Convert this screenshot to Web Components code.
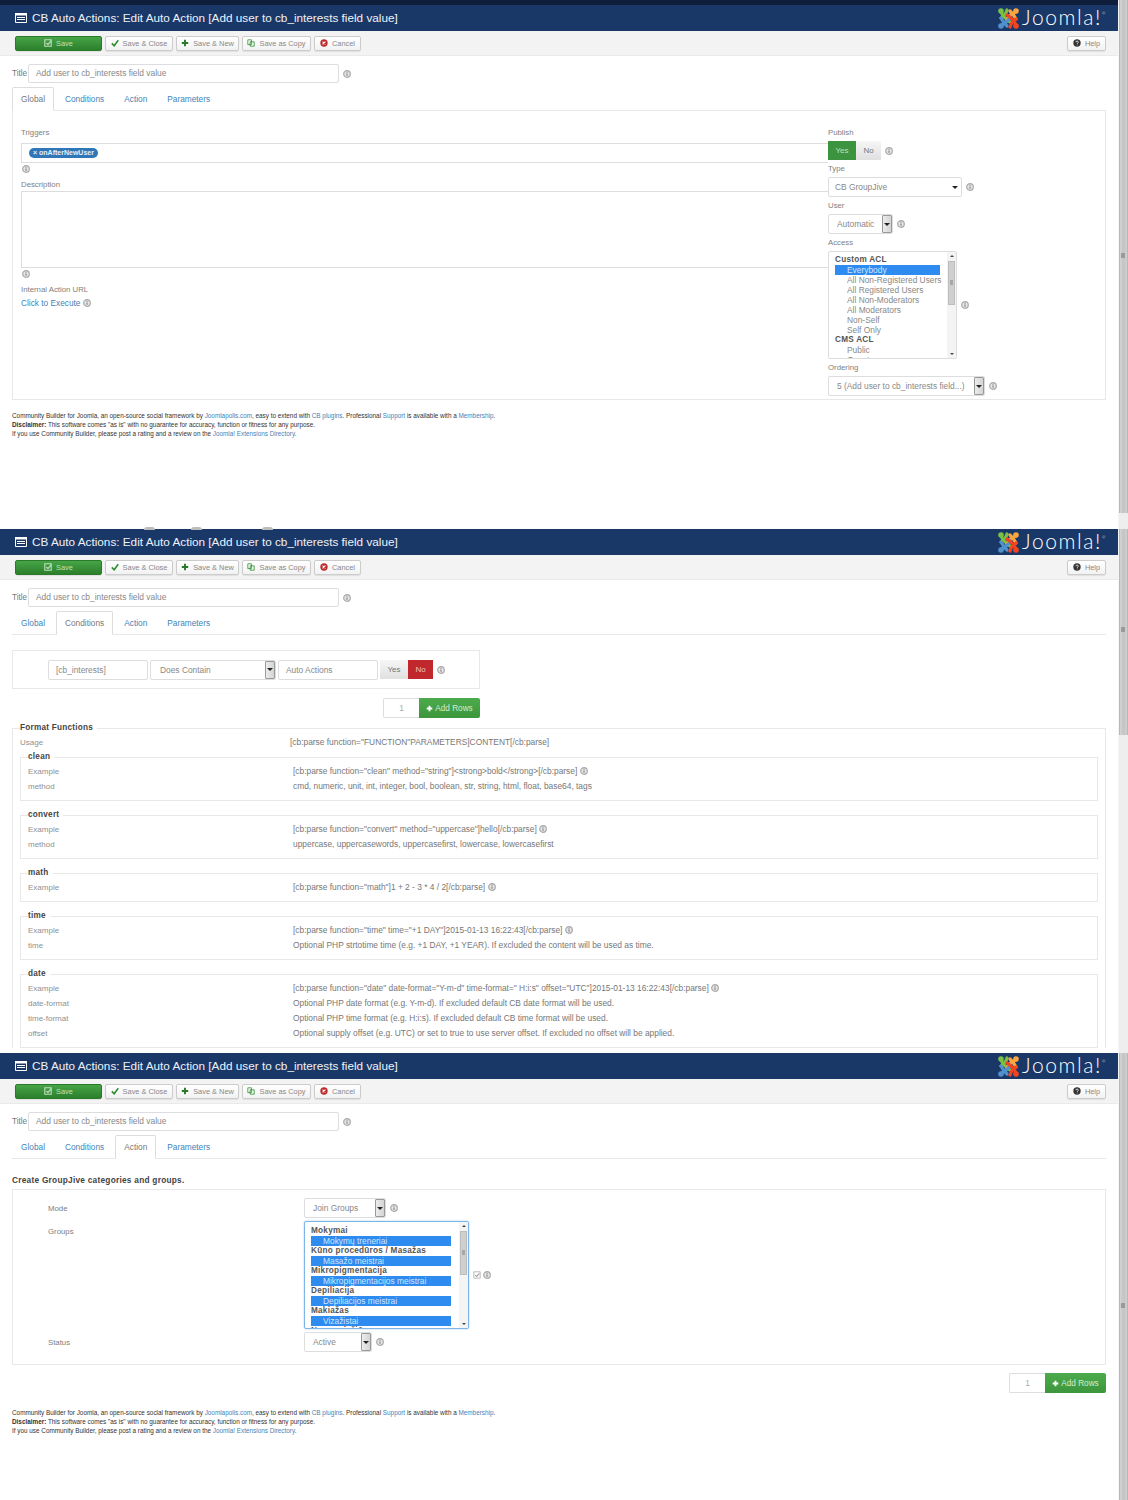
<!DOCTYPE html>
<html>
<head>
<meta charset="utf-8">
<title>CB Auto Actions</title>
<style>
  html, body { margin: 0; padding: 0; background: #fff; }
  body { font-family: "Liberation Sans", Arial, sans-serif; font-size: 8.4px; color: #777; width: 1128px; height: 1500px; overflow: hidden; }
</style>
</head>
<body>

<jm-shot h="524" strip="#0e1e3a" thumb-top="0" thumb-h="513" grip="253">
  <jm-header></jm-header>
  <jm-toolbar></jm-toolbar>
  <jm-title-row value="Add user to cb_interests field value"></jm-title-row>
  <jm-tabs active="Global"></jm-tabs>
  <jm-global-pane>
    <jm-label slot="left">Triggers</jm-label>
    <jm-tagbox slot="left">onAfterNewUser</jm-tagbox>
    <jm-info slot="left" class="stack"></jm-info>
    <jm-label slot="left" style="margin-top:7px">Description</jm-label>
    <jm-textarea slot="left"></jm-textarea>
    <jm-info slot="left" class="stack"></jm-info>
    <jm-label slot="left" style="margin-top:7px">Internal Action URL</jm-label>
    <jm-link slot="left">Click to Execute <jm-info></jm-info></jm-link>

    <jm-field slot="right" label="Publish"><jm-toggle on="Yes"></jm-toggle><jm-info></jm-info></jm-field>
    <jm-field slot="right" label="Type"><jm-select w="134" value="CB GroupJive" kind="chosen"></jm-select><jm-info></jm-info></jm-field>
    <jm-field slot="right" label="User"><jm-select w="65" value="Automatic"></jm-select><jm-info></jm-info></jm-field>
    <jm-field slot="right" label="Access"><jm-list w="129" h="108">
      <jm-opt group>Custom ACL</jm-opt>
      <jm-opt selected>Everybody</jm-opt>
      <jm-opt>All Non-Registered Users</jm-opt>
      <jm-opt>All Registered Users</jm-opt>
      <jm-opt>All Non-Moderators</jm-opt>
      <jm-opt>All Moderators</jm-opt>
      <jm-opt>Non-Self</jm-opt>
      <jm-opt>Self Only</jm-opt>
      <jm-opt group>CMS ACL</jm-opt>
      <jm-opt>Public</jm-opt>
      <jm-opt>Guest</jm-opt>
    </jm-list><jm-info></jm-info></jm-field>
    <jm-field slot="right" label="Ordering" style="margin-top:1px"><jm-select w="157" value="5 (Add user to cb_interests field...)"></jm-select><jm-info></jm-info></jm-field>
  </jm-global-pane>
  <jm-foot style="margin-top:11px"></jm-foot>
</jm-shot>

<jm-shot h="524" strip="#fff" thumb-top="5" thumb-h="206" grip="103" bumps>
  <jm-header></jm-header>
  <jm-toolbar></jm-toolbar>
  <jm-title-row value="Add user to cb_interests field value"></jm-title-row>
  <jm-tabs active="Conditions"></jm-tabs>
  <jm-cond-pane>
    <jm-input w="100" value="[cb_interests]"></jm-input>
    <jm-select w="126" value="Does Contain" style="margin-left:2px;--pad:9px"></jm-select>
    <jm-input w="100" value="Auto Actions" style="margin-left:2px"></jm-input>
    <jm-toggle on="No" style="margin-left:2px"></jm-toggle>
    <jm-info style="margin-left:4px"></jm-info>
  </jm-cond-pane>
  <jm-addrows style="width:468px;margin-top:9px"></jm-addrows>
  <jm-fs legend="Format Functions" outer>
    <jm-row outer label="Usage">[cb:parse function="FUNCTION"PARAMETERS]CONTENT[/cb:parse]</jm-row>
    <jm-fs legend="clean" style="margin-top:2px">
      <jm-row label="Example">[cb:parse function="clean" method="string"]&lt;strong&gt;bold&lt;/strong&gt;[/cb:parse] <jm-info></jm-info></jm-row>
      <jm-row label="method">cmd, numeric, unit, int, integer, bool, boolean, str, string, html, float, base64, tags</jm-row>
    </jm-fs>
    <jm-fs legend="convert">
      <jm-row label="Example">[cb:parse function="convert" method="uppercase"]hello[/cb:parse] <jm-info></jm-info></jm-row>
      <jm-row label="method">uppercase, uppercasewords, uppercasefirst, lowercase, lowercasefirst</jm-row>
    </jm-fs>
    <jm-fs legend="math">
      <jm-row label="Example">[cb:parse function="math"]1 + 2 - 3 * 4 / 2[/cb:parse] <jm-info></jm-info></jm-row>
    </jm-fs>
    <jm-fs legend="time">
      <jm-row label="Example">[cb:parse function="time" time="+1 DAY"]2015-01-13 16:22:43[/cb:parse] <jm-info></jm-info></jm-row>
      <jm-row label="time">Optional PHP strtotime time (e.g. +1 DAY, +1 YEAR). If excluded the content will be used as time.</jm-row>
    </jm-fs>
    <jm-fs legend="date">
      <jm-row label="Example">[cb:parse function="date" date-format="Y-m-d" time-format=" H:i:s" offset="UTC"]2015-01-13 16:22:43[/cb:parse] <jm-info></jm-info></jm-row>
      <jm-row label="date-format">Optional PHP date format (e.g. Y-m-d). If excluded default CB date format will be used.</jm-row>
      <jm-row label="time-format">Optional PHP time format (e.g. H:i:s). If excluded default CB time format will be used.</jm-row>
      <jm-row label="offset">Optional supply offset (e.g. UTC) or set to true to use server offset. If excluded no offset will be applied.</jm-row>
    </jm-fs>
  </jm-fs>
</jm-shot>

<jm-shot h="452" strip="#fff" thumb-top="5" thumb-h="447" grip="255">
  <jm-header></jm-header>
  <jm-toolbar></jm-toolbar>
  <jm-title-row value="Add user to cb_interests field value"></jm-title-row>
  <jm-tabs active="Action"></jm-tabs>
  <jm-action-pane heading="Create GroupJive categories and groups.">
    <jm-param label="Mode" center><jm-select w="82" value="Join Groups"></jm-select><jm-info></jm-info></jm-param>
    <jm-param label="Groups"><jm-list w="165" h="108" focus>
      <jm-opt group>Mokymai</jm-opt>
      <jm-opt selected>Mokymų treneriai</jm-opt>
      <jm-opt group>Kūno procedūros / Masažas</jm-opt>
      <jm-opt selected>Masažo meistrai</jm-opt>
      <jm-opt group>Mikropigmentacija</jm-opt>
      <jm-opt selected>Mikropigmentacijos meistrai</jm-opt>
      <jm-opt group>Depiliacija</jm-opt>
      <jm-opt selected>Depiliacijos meistrai</jm-opt>
      <jm-opt group>Makiažas</jm-opt>
      <jm-opt selected>Vizažistai</jm-opt>
      <jm-opt group>Nagų priežiūra</jm-opt>
    </jm-list><jm-check></jm-check><jm-info style="margin-left:-2px"></jm-info></jm-param>
    <jm-param label="Status" center><jm-select w="68" value="Active"></jm-select><jm-info></jm-info></jm-param>
  </jm-action-pane>
  <jm-addrows style="width:1094px;margin-top:8px"></jm-addrows>
  <jm-foot style="margin-top:15px"></jm-foot>
</jm-shot>

<script>
// small helper, every element below is just a class with a shadow root
function shadow(el, html) {
  el.attachShadow({mode: 'open'});
  el.shadowRoot.innerHTML = html;
}

const ICONS = {
  save: '<path d="M1 1h8v8H1z" fill="none" stroke="currentColor" stroke-width="1.4"/><path d="M3 5l2 2 4-5" fill="none" stroke="currentColor" stroke-width="1.6"/>',
  check: '<path d="M1 5.5l3 3 5-7" fill="none" stroke="currentColor" stroke-width="2"/>',
  plus: '<path d="M5 1v8M1 5h8" fill="none" stroke="currentColor" stroke-width="2.4"/>',
  copy: '<path d="M1 1h4.5v6H1z M4 3.5h5v5.5H4z" fill="none" stroke="currentColor" stroke-width="1"/>',
  cancel: '<circle cx="5" cy="5" r="4.6" fill="currentColor"/><path d="M3.2 3.2l3.6 3.6M6.8 3.2L3.2 6.8" stroke="#fff" stroke-width="1.4"/>',
  help: '<circle cx="5" cy="5" r="4.6" fill="currentColor"/><path d="M3.6 4c0-2 3-2 3 0 0 1-1.400 1-1.400 2" fill="none" stroke="#fff" stroke-width="1"/><circle cx="5.200" cy="7.600" r=".6" fill="#fff"/>'
};

class JmShot extends HTMLElement {
  constructor() {
    super();
    shadow(this, `
      <style>
        :host { display: flex; overflow: hidden; position: relative; }
        .main { width: 1118px; flex: none; display: flex; flex-direction: column; }
        .strip { height: 5px; flex: none; }
        .content { padding: 0 12px; }
        .head { flex: none; }
        .track { width: 10px; flex: none; background: #eee; border-left: 1px solid #f6f6f6; box-sizing: border-box; position: relative; }
        .thumb { position: absolute; left: 0; right: 0; background: linear-gradient(90deg, #d4d4d4, #c4c4c4 50%, #cfcfcf); border: 1px solid #b8b8b8; border-width: 0 1px; box-sizing: border-box; }
        .grip { position: absolute; left: 2px; width: 4px; height: 5px; background: #9a9a9a; }
        .bump { position: absolute; top: 3px; width: 11px; height: 3px; border-radius: 6px 6px 0 0; background: #bbb; }
      </style>
      <div class="main">
        <div class="strip"></div>
        <div class="head"><slot name="head"></slot></div>
        <div class="content"><slot></slot></div>
      </div>
      <div class="track"><div class="thumb"></div><div class="grip"></div></div>
    `);
  }
  connectedCallback() {
    const r = this.shadowRoot;
    this.style.height = this.getAttribute('h') + 'px';
    r.querySelector('.strip').style.background = this.getAttribute('strip');
    const th = r.querySelector('.thumb');
    th.style.top = this.getAttribute('thumb-top') + 'px';
    th.style.height = this.getAttribute('thumb-h') + 'px';
    r.querySelector('.grip').style.top = this.getAttribute('grip') + 'px';
    for (const c of this.children) {
      if (c.localName === 'jm-header' || c.localName === 'jm-toolbar') c.slot = 'head';
    }
    if (this.hasAttribute('bumps')) {
      for (const x of [144, 191, 262]) {
        const b = document.createElement('div');
        b.className = 'bump';
        b.style.left = x + 'px';
        r.appendChild(b);
      }
    }
  }
}

class JmHeader extends HTMLElement {
  constructor() {
    super();
    shadow(this, `
      <style>
        :host { display: flex; align-items: center; height: 26px; background: #1a3867; color: #fff; padding-left: 15px; }
        .title { font-size: 11.750px; margin: -1px 0 0 5px; color: #eef2f8; white-space: nowrap; }
        .logo { margin-left: auto; display: flex; align-items: center; margin-right: 11px; }
        .word { font-family: "Lato", "Open Sans", sans-serif; font-weight: 300; font-size: 21px; letter-spacing: 1.600px; margin: -2px 0 0 2px; color: #fff; line-height: 26px; }
        sup { font-size: 4px; vertical-align: 10px; line-height: 0; }
      </style>
      <svg width="12" height="10" viewBox="0 0 12 10"><path d="M.5.5h11v9H.5z" fill="none" stroke="#fff"/><path d="M0 0h12v2.500H0z" fill="#fff"/><path d="M2 4.500h8M2 6.500h8" stroke="#fff"/></svg>
      <div class="title">CB Auto Actions: Edit Auto Action [Add user to cb_interests field value]</div>
      <div class="logo">
        <svg width="23" height="23" viewBox="0 0 23 23" fill="none" stroke-width="3.200" stroke-linecap="round">
          <path d="M4 5c2 5 5 7 9 10" stroke="#7ac143"/><path d="M10 3c-1 4-3 6-6 8" stroke="#7ac143"/><circle cx="4" cy="4" r="2.800" fill="#7ac143"/>
          <path d="M19 5c-4 1-7 4-9 8" stroke="#f9a541"/><path d="M13 4c2 2 4 4 6 8" stroke="#f9a541"/><circle cx="19" cy="4" r="2.800" fill="#f9a541"/>
          <path d="M4 18c4-1 7-4 9-8" stroke="#5091cd"/><path d="M10 19c-2-2-4-4-6-8" stroke="#5091cd"/><circle cx="4" cy="19" r="2.800" fill="#5091cd"/>
          <path d="M19 18c-2-5-5-7-9-10" stroke="#f44321"/><path d="M13 20c1-4 3-6 6-8" stroke="#f44321"/><circle cx="19" cy="19" r="2.800" fill="#f44321"/>
        </svg>
        <div class="word">Joomla!<sup>®</sup></div>
      </div>
    `);
  }
}

class JmBtn extends HTMLElement {
  constructor() {
    super();
    shadow(this, `
      <style>
        :host { display: inline-flex; align-items: center; justify-content: center; gap: 4px; height: 15px; box-sizing: border-box; background: linear-gradient(#fff, #f2f2f2); border: 1px solid #ccc; border-radius: 2px; font-size: 7.400px; color: #888; white-space: nowrap; box-shadow: 0 1px 1px rgba(0,0,0,.08); }
        :host([primary]) { background: linear-gradient(#46a546, #2c7f2c); border-color: #2b7a2b; color: #bfe0bf; }
        svg { width: 8px; height: 8px; flex: none; }
      </style>
      <svg viewBox="0 0 10 10"></svg><slot></slot>
    `);
  }
  connectedCallback() {
    const svg = this.shadowRoot.querySelector('svg');
    svg.innerHTML = ICONS[this.getAttribute('icon')] || '';
    svg.style.color = this.getAttribute('tint') || 'currentColor';
    this.style.width = this.getAttribute('w') + 'px';
  }
}

class JmToolbar extends HTMLElement {
  constructor() {
    super();
    shadow(this, `
      <style>
        :host { display: flex; align-items: center; gap: 3px; height: 25px; box-sizing: border-box; padding: 0 12px 0 15px; background: #f3f3f3; border-bottom: 1px solid #eaeaea; }
        .help { margin-left: auto; }
      </style>
      <jm-btn primary icon="save" w="87">Save</jm-btn>
      <jm-btn icon="check" tint="#2f8f2f" w="68">Save &amp; Close</jm-btn>
      <jm-btn icon="plus" tint="#2a7a2a" w="63">Save &amp; New</jm-btn>
      <jm-btn icon="copy" tint="#2f8f2f" w="69">Save as Copy</jm-btn>
      <jm-btn icon="cancel" tint="#bd2c2c" w="47">Cancel</jm-btn>
      <jm-btn class="help" icon="help" tint="#333" w="39">Help</jm-btn>
    `);
  }
}

class JmInfo extends HTMLElement {
  constructor() {
    super();
    shadow(this, `
      <style>
        :host { display: inline-flex; width: 8px; height: 8px; vertical-align: -1px; }
        :host(.stack) { display: block; margin: 2px 0 0 1px; }
      </style>
      <svg width="8" height="8" viewBox="0 0 8 8"><circle cx="4" cy="4" r="3.300" fill="#e4e4e4" stroke="#aaa" stroke-width="1.200"/><path d="M4 3.400v2.400" stroke="#888" stroke-width="1.200"/><circle cx="4" cy="2.200" r=".6" fill="#888"/></svg>
    `);
  }
}

class JmInput extends HTMLElement {
  static get observedAttributes() { return ['value', 'w']; }
  constructor() {
    super();
    shadow(this, `
      <style>
        :host { display: inline-flex; align-items: center; height: 20px; box-sizing: border-box; border: 1px solid #ddd; border-radius: 2px; background: #fff; padding: 0 7px; font-size: 8.400px; color: #888; white-space: nowrap; overflow: hidden; flex: none; }
      </style>
      <span></span>
    `);
  }
  attributeChangedCallback(name, old, val) {
    if (name === 'value') this.shadowRoot.querySelector('span').textContent = val;
    if (name === 'w') this.style.width = val + 'px';
  }
}

class JmTitleRow extends HTMLElement {
  constructor() {
    super();
    shadow(this, `
      <style>
        :host { display: flex; align-items: center; gap: 4px; margin-top: 8px; height: 19px; font-size: 8.200px; color: #777; }
        .lab { width: 15px; margin-right: -3px; }
      </style>
      <span class="lab">Title</span><jm-input w="311" style="height:19px;padding-bottom:1px"></jm-input><jm-info></jm-info>
    `);
  }
  connectedCallback() {
    this.shadowRoot.querySelector('jm-input').setAttribute('value', this.getAttribute('value'));
  }
}

class JmTabs extends HTMLElement {
  constructor() {
    super();
    shadow(this, `
      <style>
        :host { display: flex; gap: 2px; margin-top: 4px; height: 24px; box-sizing: border-box; font-size: 8.300px; color: #3f83b8; position: relative; z-index: 1; }
        div { padding: 0 9px; line-height: 24px; height: 24px; box-sizing: border-box; margin-right: -1px; }
        div + div { margin-left: 1px; }
        .on { color: #777; border: 1px solid #ddd; border-bottom-color: #fff; border-radius: 2px 2px 0 0; background: #fff; line-height: 23px; padding: 0 8px; }
      </style>
      <div>Global</div><div>Conditions</div><div>Action</div><div>Parameters</div>
    `);
  }
  connectedCallback() {
    for (const d of this.shadowRoot.querySelectorAll('div')) {
      if (d.textContent === this.getAttribute('active')) d.className = 'on';
    }
  }
}

class JmLabel extends HTMLElement {
  constructor() {
    super();
    shadow(this, `<style>:host { display: block; line-height: 10px; font-size: 7.800px; color: #808080; }</style><slot></slot>`);
  }
}

class JmLink extends HTMLElement {
  constructor() {
    super();
    shadow(this, `<style>:host { display: block; margin-top: 3px; line-height: 10px; font-size: 8.300px; color: #3f83b8; }</style><slot></slot>`);
  }
}

class JmTagbox extends HTMLElement {
  constructor() {
    super();
    shadow(this, `
      <style>
        :host { display: flex; align-items: center; height: 20px; box-sizing: border-box; margin-top: 5px; padding-left: 7px; border: 1px solid #ddd; border-right: 0; background: #fff; }
        .chip { height: 10px; line-height: 10px; padding: 0 4px; border-radius: 5px; background: #2f77b8; color: #e4f0fa; font-size: 7px; font-weight: bold; }
      </style>
      <span class="chip">× <slot></slot></span>
    `);
  }
}

class JmTextarea extends HTMLElement {
  constructor() {
    super();
    shadow(this, `<style>:host { display: block; height: 77px; margin-top: 1px; box-sizing: border-box; border: 1px solid #ddd; border-right: 0; background: #fff; }</style>`);
  }
}

class JmToggle extends HTMLElement {
  constructor() {
    super();
    shadow(this, `
      <style>
        :host { display: inline-flex; height: 19px; font-size: 8px; flex: none; }
        div { width: 25px; line-height: 19px; text-align: center; background: linear-gradient(#f6f6f6, #e0e0e0); color: #777; }
        div[data-k=Yes] { width: 28px; }
        .Yes { background: #3d9440; color: #bfe0bf; }
        .No { background: #c0282d; color: #f0c0c0; }
      </style>
      <div data-k="Yes">Yes</div><div data-k="No">No</div>
    `);
  }
  connectedCallback() {
    for (const d of this.shadowRoot.querySelectorAll('div')) {
      if (d.dataset.k === this.getAttribute('on')) d.className = d.dataset.k;
    }
  }
}

class JmSelect extends HTMLElement {
  constructor() {
    super();
    shadow(this, `
      <style>
        :host { display: inline-flex; align-items: center; height: 20px; box-sizing: border-box; border: 1px solid #ddd; border-radius: 2px; background: #fff; font-size: 8.400px; color: #888; flex: none; white-space: nowrap; overflow: hidden; }
        .v { padding-left: var(--pad, 8px); flex: 1; overflow: hidden; }
        .b { width: 10px; height: 100%; box-sizing: border-box; background: linear-gradient(90deg, #ececec, #d4d4d4); border: 1px solid #999; border-radius: 1px; display: flex; align-items: center; justify-content: center; }
        :host([kind=chosen]) .v { padding-left: 6px; }
        :host([kind=chosen]) .b { background: none; border: 0; margin-right: 1px; }
        i { width: 0; height: 0; border: 3px solid transparent; border-top: 3px solid #222; border-bottom: 0; }
      </style>
      <span class="v"></span><span class="b"><i></i></span>
    `);
  }
  connectedCallback() {
    this.shadowRoot.querySelector('.v').textContent = this.getAttribute('value');
    this.style.width = this.getAttribute('w') + 'px';
  }
}

class JmOpt extends HTMLElement {
  constructor() {
    super();
    shadow(this, `
      <style>
        :host { display: block; height: 10px; line-height: 10px; padding-left: 12px; font-size: 8.400px; color: #888; white-space: nowrap; }
        :host([group]) { padding-left: 0; font-weight: bold; color: #555; letter-spacing: .25px; font-size: 8.200px; }
        :host([selected]) { background: #2e8bef; color: #cfe6ff; }
      </style>
      <slot></slot>
    `);
  }
}

class JmList extends HTMLElement {
  constructor() {
    super();
    shadow(this, `
      <style>
        :host { display: inline-flex; box-sizing: border-box; border: 1px solid #ddd; border-radius: 2px; background: #fff; overflow: hidden; flex: none; }
        :host([focus]) { border-color: #7fb5e6; box-shadow: 0 0 2px #9cc8ef; }
        .opts { flex: 1; min-width: 0; padding: 3px 7px 0 6px; overflow: hidden; }
        :host([focus]) .opts { padding: 4px 8px 0 6px; }
        .sb { width: 9px; flex: none; background: #f4f4f4; position: relative; display: flex; flex-direction: column; align-items: center; justify-content: space-between; padding: 3px 0; box-sizing: border-box; }
        .thumb { position: absolute; left: 1px; right: 1px; top: 9px; height: 44px; background: #cfcfcf; border: 1px solid #bdbdbd; box-sizing: border-box; }
        .thumb::after { content: ""; position: absolute; left: 1px; right: 1px; top: 18px; height: 5px; background: #a8a8a8; }
        .up { border: 2px solid transparent; border-bottom: 2px solid #444; border-top: 0; }
        .down { border: 2px solid transparent; border-top: 2px solid #444; border-bottom: 0; }
      </style>
      <div class="opts"><slot></slot></div>
      <div class="sb"><i class="up"></i><div class="thumb"></div><i class="down"></i></div>
    `);
  }
  connectedCallback() {
    this.style.width = this.getAttribute('w') + 'px';
    this.style.height = this.getAttribute('h') + 'px';
  }
}

class JmField extends HTMLElement {
  constructor() {
    super();
    shadow(this, `
      <style>
        :host { display: block; margin-bottom: 4px; }
        .lab { line-height: 10px; font-size: 7.800px; color: #808080; margin-bottom: 3px; }
        .ctl { display: flex; align-items: center; gap: 4px; }
      </style>
      <div class="lab"></div><div class="ctl"><slot></slot></div>
    `);
  }
  connectedCallback() {
    this.shadowRoot.querySelector('.lab').textContent = this.getAttribute('label');
  }
}

class JmGlobalPane extends HTMLElement {
  constructor() {
    super();
    shadow(this, `
      <style>
        :host { display: grid; grid-template-columns: 807px 1fr; height: 290px; box-sizing: border-box; margin-top: -1px; padding: 17px 0 0 8px; border: 1px solid #e8e8e8; }
      </style>
      <div><slot name="left"></slot></div>
      <div><slot name="right"></slot></div>
    `);
  }
}

class JmCondPane extends HTMLElement {
  constructor() {
    super();
    shadow(this, `
      <style>
        :host { display: block; margin-top: -1px; padding-top: 15px; border-top: 1px solid #e8e8e8; }
        .box { display: flex; align-items: center; width: 468px; height: 39px; box-sizing: border-box; padding-left: 35px; border: 1px solid #e8e8e8; }
      </style>
      <div class="box"><slot></slot></div>
    `);
  }
}

class JmAddrows extends HTMLElement {
  constructor() {
    super();
    shadow(this, `
      <style>
        :host { display: flex; justify-content: flex-end; height: 20px; }
        .n { width: 36px; box-sizing: border-box; border: 1px solid #ddd; border-right: 0; border-radius: 2px 0 0 2px; text-align: center; line-height: 18px; color: #aaa; font-size: 8.400px; }
        .b { width: 61px; box-sizing: border-box; background: linear-gradient(#4cab4c, #3c963c); border-radius: 0 2px 2px 0; color: #d5ecd5; font-size: 8.200px; display: flex; align-items: center; justify-content: center; gap: 2px; white-space: nowrap; }
        svg { width: 7px; height: 7px; color: #fff; }
      </style>
      <div class="n">1</div>
      <div class="b"><svg viewBox="0 0 10 10"><path d="M5 1v8M1 5h8" stroke="currentColor" stroke-width="2.600"/></svg>Add Rows</div>
    `);
  }
}

class JmFs extends HTMLElement {
  constructor() {
    super();
    shadow(this, `
      <style>
        :host { display: block; margin-top: 9px; }
        :host([outer]) { margin-top: 5px; }
        fieldset { margin: 0; padding: 2px 7px 6px; border: 1px solid #e8e8e8; min-width: 0; }
        :host([outer]) fieldset { padding: 2px 7px 0; }
        legend { padding: 0 4px 0 0; line-height: 10px; font-weight: bold; font-size: 8.200px; color: #444; letter-spacing: .25px; }
      </style>
      <fieldset><legend></legend><slot></slot></fieldset>
    `);
  }
  connectedCallback() {
    this.shadowRoot.querySelector('legend').textContent = this.getAttribute('legend');
  }
}

class JmRow extends HTMLElement {
  constructor() {
    super();
    shadow(this, `
      <style>
        :host { display: grid; grid-template-columns: 265px 1fr; height: 15px; line-height: 15px; font-size: 8.400px; color: #777; white-space: nowrap; }
        :host([outer]) { grid-template-columns: 270px 1fr; }
        .l { font-size: 8px; color: #909090; }
      </style>
      <span class="l"></span><span><slot></slot></span>
    `);
  }
  connectedCallback() {
    this.shadowRoot.querySelector('.l').textContent = this.getAttribute('label');
  }
}

class JmActionPane extends HTMLElement {
  constructor() {
    super();
    shadow(this, `
      <style>
        :host { display: block; margin-top: -1px; border-top: 1px solid #e8e8e8; }
        h3 { margin: 0; padding-top: 17px; height: 13px; box-sizing: content-box; line-height: 9px; font-size: 8.300px; color: #444; letter-spacing: .25px; }
        .box { height: 176px; box-sizing: border-box; border: 1px solid #e8e8e8; padding: 8px 0 0 35px; display: flex; flex-direction: column; gap: 3px; }
      </style>
      <h3></h3>
      <div class="box"><slot></slot></div>
    `);
  }
  connectedCallback() {
    this.shadowRoot.querySelector('h3').textContent = this.getAttribute('heading');
  }
}

class JmParam extends HTMLElement {
  constructor() {
    super();
    shadow(this, `
      <style>
        :host { display: grid; grid-template-columns: 256px 1fr; }
        .l { font-size: 7.800px; color: #808080; line-height: 10px; padding-top: 6px; }
        :host([center]) .l { align-self: center; padding-top: 2px; }
        .c { display: flex; align-items: center; gap: 4px; }
      </style>
      <span class="l"></span><div class="c"><slot></slot></div>
    `);
  }
  connectedCallback() {
    this.shadowRoot.querySelector('.l').textContent = this.getAttribute('label');
  }
}

class JmCheck extends HTMLElement {
  constructor() {
    super();
    shadow(this, `<style>:host { display: inline-flex; }</style>
      <svg width="8" height="8" viewBox="0 0 10 10"><path d="M1 1h8v8H1z" fill="none" stroke="#aaa"/><path d="M2.500 5l2 2 3.500-4" fill="none" stroke="#999" stroke-width="1.300"/></svg>`);
  }
}

class JmFoot extends HTMLElement {
  constructor() {
    super();
    shadow(this, `
      <style>
        :host { display: block; font-size: 6.360px; line-height: 9.200px; color: #333; white-space: nowrap; }
        a { color: #3f83b8; text-decoration: none; }
      </style>
      <div>Community Builder for Joomla, an open-source social framework by <a>Joomlapolis.com</a>, easy to extend with <a>CB plugins</a>. Professional <a>Support</a> is available with a <a>Membership</a>.</div>
      <div><b>Disclaimer:</b> This software comes "as is" with no guarantee for accuracy, function or fitness for any purpose.</div>
      <div>If you use Community Builder, please post a rating and a review on the <a>Joomla! Extensions Directory</a>.</div>
    `);
  }
}

customElements.define('jm-info', JmInfo);
customElements.define('jm-input', JmInput);
customElements.define('jm-title-row', JmTitleRow);
customElements.define('jm-btn', JmBtn);
customElements.define('jm-toolbar', JmToolbar);
customElements.define('jm-header', JmHeader);
customElements.define('jm-tabs', JmTabs);
customElements.define('jm-label', JmLabel);
customElements.define('jm-link', JmLink);
customElements.define('jm-tagbox', JmTagbox);
customElements.define('jm-textarea', JmTextarea);
customElements.define('jm-toggle', JmToggle);
customElements.define('jm-select', JmSelect);
customElements.define('jm-opt', JmOpt);
customElements.define('jm-list', JmList);
customElements.define('jm-field', JmField);
customElements.define('jm-global-pane', JmGlobalPane);
customElements.define('jm-cond-pane', JmCondPane);
customElements.define('jm-addrows', JmAddrows);
customElements.define('jm-fs', JmFs);
customElements.define('jm-row', JmRow);
customElements.define('jm-action-pane', JmActionPane);
customElements.define('jm-param', JmParam);
customElements.define('jm-check', JmCheck);
customElements.define('jm-foot', JmFoot);
customElements.define('jm-shot', JmShot);
</script>
</body>
</html>
